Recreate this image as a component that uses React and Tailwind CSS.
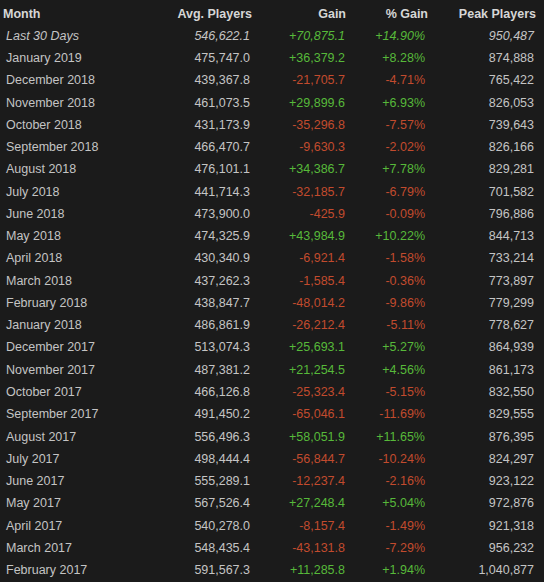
const rows = [
  ['Last 30 Days', '546,622.1', '+70,875.1', '+14.90%', '950,487'],
  ['January 2019', '475,747.0', '+36,379.2', '+8.28%', '874,888'],
  ['December 2018', '439,367.8', '-21,705.7', '-4.71%', '765,422'],
  ['November 2018', '461,073.5', '+29,899.6', '+6.93%', '826,053'],
  ['October 2018', '431,173.9', '-35,296.8', '-7.57%', '739,643'],
  ['September 2018', '466,470.7', '-9,630.3', '-2.02%', '826,166'],
  ['August 2018', '476,101.1', '+34,386.7', '+7.78%', '829,281'],
  ['July 2018', '441,714.3', '-32,185.7', '-6.79%', '701,582'],
  ['June 2018', '473,900.0', '-425.9', '-0.09%', '796,886'],
  ['May 2018', '474,325.9', '+43,984.9', '+10.22%', '844,713'],
  ['April 2018', '430,340.9', '-6,921.4', '-1.58%', '733,214'],
  ['March 2018', '437,262.3', '-1,585.4', '-0.36%', '773,897'],
  ['February 2018', '438,847.7', '-48,014.2', '-9.86%', '779,299'],
  ['January 2018', '486,861.9', '-26,212.4', '-5.11%', '778,627'],
  ['December 2017', '513,074.3', '+25,693.1', '+5.27%', '864,939'],
  ['November 2017', '487,381.2', '+21,254.5', '+4.56%', '861,173'],
  ['October 2017', '466,126.8', '-25,323.4', '-5.15%', '832,550'],
  ['September 2017', '491,450.2', '-65,046.1', '-11.69%', '829,555'],
  ['August 2017', '556,496.3', '+58,051.9', '+11.65%', '876,395'],
  ['July 2017', '498,444.4', '-56,844.7', '-10.24%', '824,297'],
  ['June 2017', '555,289.1', '-12,237.4', '-2.16%', '923,122'],
  ['May 2017', '567,526.4', '+27,248.4', '+5.04%', '972,876'],
  ['April 2017', '540,278.0', '-8,157.4', '-1.49%', '921,318'],
  ['March 2017', '548,435.4', '-43,131.8', '-7.29%', '956,232'],
  ['February 2017', '591,567.3', '+11,285.8', '+1.94%', '1,040,877'],
]

function Row({ r, first }) {
  const up = r[2].startsWith('+')
  const tone = up ? 'text-[#57b93a]' : 'text-[#c24b2e]'
  return (
    <div className={`grid grid-cols-[160px_92px_94px_82px_112px] h-[22.28px] items-center ${first ? 'italic' : ''}`}>
      <div className="pl-[6px]">{r[0]}</div>
      <div className="text-right pr-[2px]">{r[1]}</div>
      <div className={`text-right pr-[1px] ${tone}`}>{r[2]}</div>
      <div className={`text-right pr-[3px] ${tone}`}>{r[3]}</div>
      <div className="text-right pr-[6px]">{r[4]}</div>
    </div>
  )
}

export default function App() {
  return (
    <div className="w-[544px] h-[582px] overflow-hidden bg-[#1b1b1b] text-[#c4c4c4] text-[12.5px] font-['Liberation_Sans',Arial,sans-serif]">
      <div className="grid grid-cols-[160px_92px_94px_82px_112px] h-[25px] items-center pt-[4px] font-bold text-[#d6d6d6]">
        <div className="pl-[3px]">Month</div>
        <div className="text-right">Avg. Players</div>
        <div className="text-right">Gain</div>
        <div className="text-right">% Gain</div>
        <div className="text-right pr-[4px]">Peak Players</div>
      </div>
      {rows.map((r, i) => (
        <Row key={r[0]} r={r} first={i === 0} />
      ))}
    </div>
  )
}
